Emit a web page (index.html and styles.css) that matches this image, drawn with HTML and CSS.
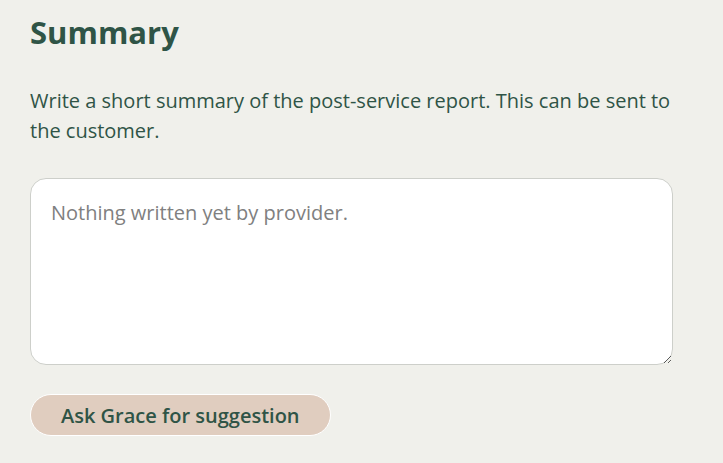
FILE: index.html
```html
<!DOCTYPE html>
<html lang="en">
<head>
  <meta charset="UTF-8">
  <meta name="viewport" content="width=device-width, initial-scale=1.0">
  <title>Summary</title>
  <link rel="stylesheet" href="styles.css">
</head>
<body>
  <section class="summary">
    <h1>Summary</h1>
    <p class="intro">Write a short summary of the post-service report. This can be sent to the customer.</p>
    <textarea id="summaryText" class="summary-input" placeholder="Nothing written yet by provider."></textarea>
    <button type="button" class="suggest-button">Ask Grace for suggestion</button>
  </section>
</body>
</html>
```

FILE: styles.css
```css
body {
  margin: 0;
  background: #f0f0eb;
  color: #2f5446;
  font-family: "Open Sans", "Noto Sans", sans-serif;
}
.summary {
  width: 643px;
  padding: 10px 0 0 30px;
  display: flex;
  flex-direction: column;
  align-items: flex-start;
}
h1 {
  font-size: 31px;
  font-weight: 700;
  margin: 0;
  line-height: 44px;
}
.intro {
  font-size: 20px;
  line-height: 30px;
  margin: 32px 0 32px;
}
.summary-input {
  box-sizing: border-box;
  width: 100%;
  height: 187px;
  padding: 20px 20px;
  border: 1px solid #cdcfca;
  border-radius: 16px;
  background: #fff;
  font-family: inherit;
  font-size: 20px;
  color: #2f5446;
}
.summary-input::placeholder {
  color: #808080;
}
.suggest-button {
  margin-top: 29px;
  height: 42px;
  padding: 0 30px;
  border: 1px solid #fff;
  border-radius: 21px;
  background: #e0cdbf;
  color: #2f5446;
  font-family: inherit;
  font-size: 20px;
  font-weight: 600;
}
```
